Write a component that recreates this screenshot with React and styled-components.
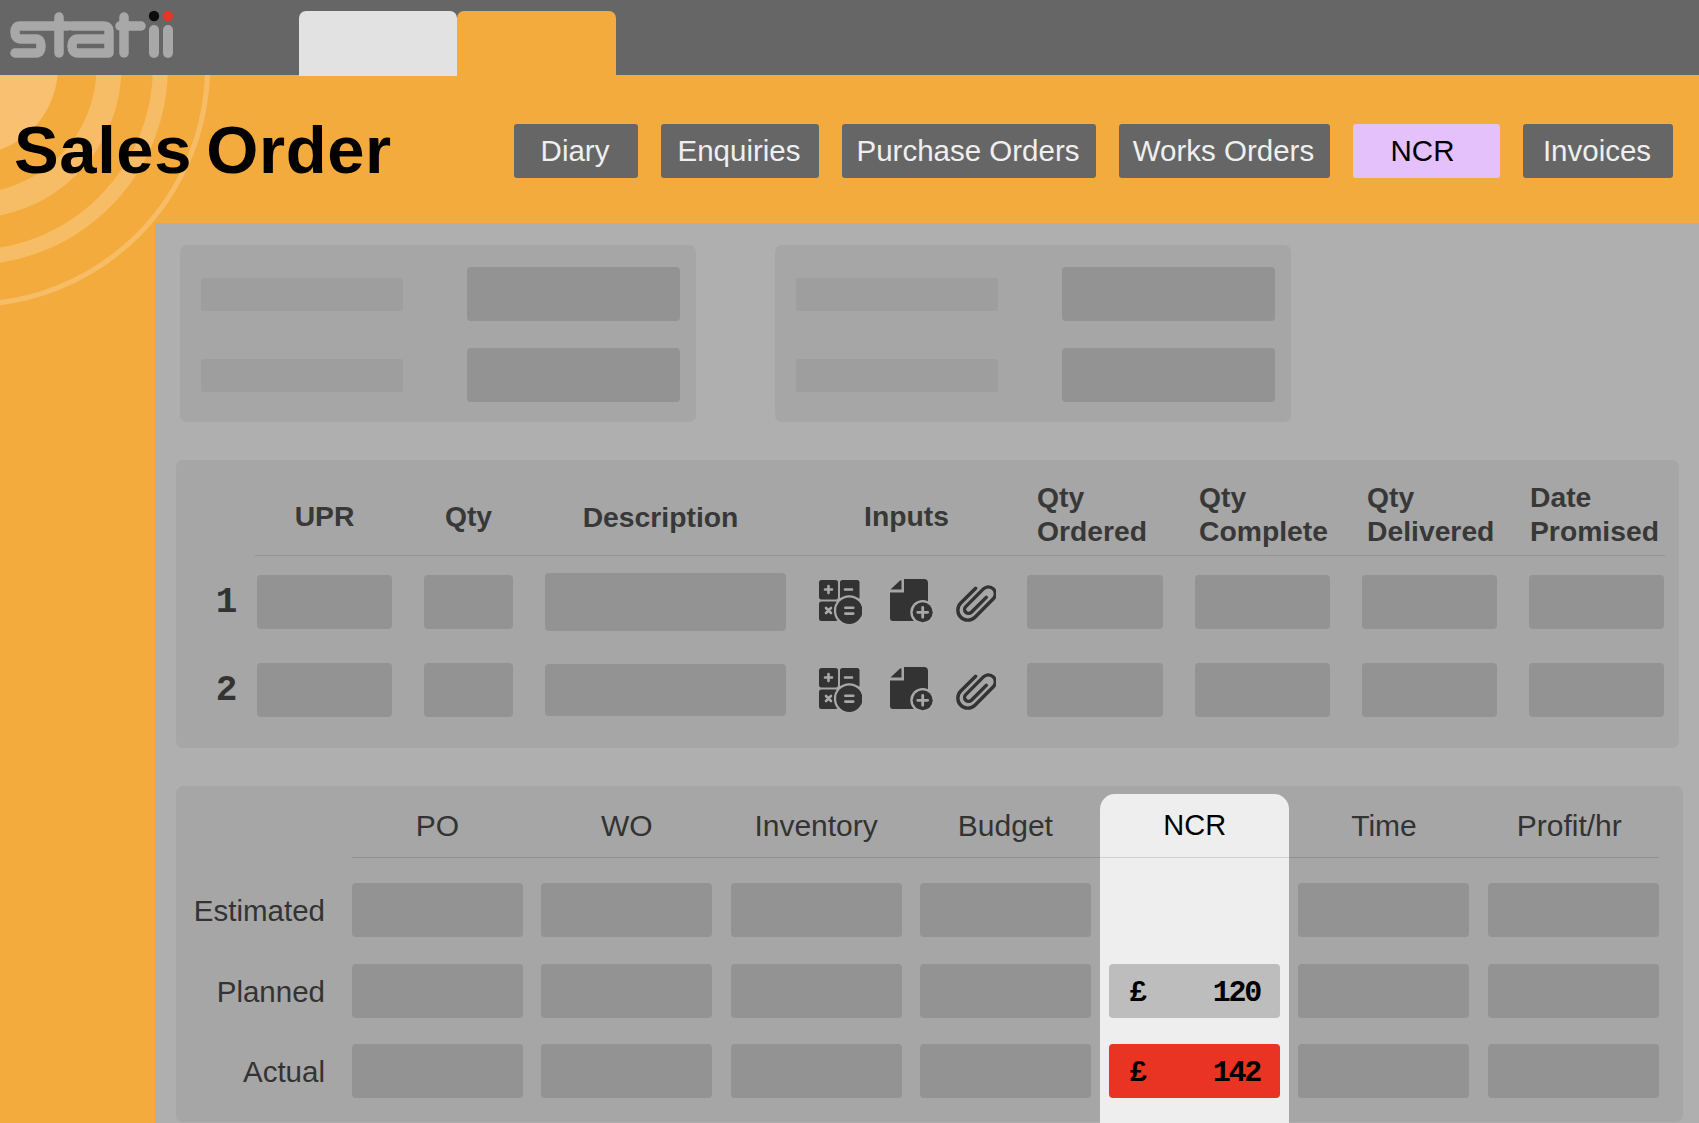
import React from "react";
import styled, { createGlobalStyle, css } from "styled-components";

const Global = createGlobalStyle`
  html, body { margin: 0; padding: 0; height: 1123px; overflow: hidden; background: #f4ab3d; }
  body { font-family: "Liberation Sans", Arial, sans-serif; }
`;

const Page = styled.div`
  position: relative;
  width: 1699px;
  height: 1123px;
  overflow: hidden;
  display: flex;
  flex-direction: column;
  background: #f4ab3d;
`;

const Rings = styled.svg`
  position: absolute;
  left: 0;
  top: 0;
  width: 320px;
  height: 330px;
`;

const TopBar = styled.div`
  position: relative;
  z-index: 2;
  flex: none;
  height: 75px;
  background: #666666;
  display: flex;
`;

const LogoSlot = styled.div`
  width: 299px;
  flex: none;
`;

const Tab = styled.div`
  width: ${(p) => p.$w}px;
  height: 65px;
  margin-top: 11px;
  border-radius: 7px 7px 0 0;
  background: ${(p) => p.$bg};
`;

const Header = styled.header`
  position: relative;
  z-index: 1;
  flex: none;
  height: 148px;
  display: flex;
  justify-content: space-between;
  padding: 0 26px 0 14px;
  box-sizing: border-box;
`;

const Title = styled.h1`
  margin: 39px 0 0;
  font-size: 67px;
  line-height: 72px;
  font-weight: 700;
  color: #000;
  letter-spacing: 0.6px;
  word-spacing: -5px;
  white-space: nowrap;
`;

const Nav = styled.nav`
  display: flex;
  gap: 23px;
  margin-top: 49px;
  align-items: flex-start;
`;

const NavButton = styled.div`
  width: ${(p) => p.$w}px;
  height: 54px;
  box-sizing: border-box;
  padding-right: ${(p) => (p.$active ? 8 : 2)}px;
  border-radius: 3px;
  background: ${(p) => (p.$active ? "#e4c1fb" : "#666666")};
  color: ${(p) => (p.$active ? "#000" : "#efefef")};
  font-size: 29.5px;
  display: flex;
  align-items: center;
  justify-content: center;
`;

const Main = styled.main`
  position: relative;
  z-index: 1;
  flex: 1;
  min-height: 0;
  margin-left: 155px;
  background: #afafaf;
  padding: 22px 0 0 21px;
  display: flex;
  flex-direction: column;
`;

const InfoRow = styled.section`
  display: flex;
  gap: 79px;
  margin-left: 4px;
`;

const InfoPanel = styled.div`
  width: 516px;
  height: 177px;
  box-sizing: border-box;
  padding: 22px 0 0 21px;
  border-radius: 7px;
  background: #a6a6a6;
  display: grid;
  grid-template-columns: 202px 213px;
  grid-auto-rows: 54px;
  column-gap: 64px;
  row-gap: 27px;
  align-items: center;
`;

const LabelStub = styled.div`
  height: 33px;
  border-radius: 3px;
  background: #9e9e9e;
`;

const Field = styled.div`
  height: ${(p) => p.$h || 54}px;
  border-radius: 4px;
  background: #939393;
`;

const LinesPanel = styled.section`
  width: 1503px;
  height: 288px;
  flex: none;
  margin-top: 38px;
  box-sizing: border-box;
  padding-top: 16px;
  border-radius: 7px;
  background: #a6a6a6;
`;

const lineColumns = css`
  display: grid;
  grid-template-columns: 22px 135px 89px 241px 177px 136px 135px 135px 135px;
  column-gap: 32px;
  padding-left: 27px;
`;

const LinesHead = styled.div`
  ${lineColumns}
  height: 79px;
  align-items: center;
`;

const HeadCell = styled.div`
  font-size: 28.3px;
  line-height: 34px;
  font-weight: 700;
  color: #383838;
  white-space: nowrap;
  text-align: ${(p) => (p.$left ? "left" : "center")};
  padding-left: ${(p) => p.$pad || 0}px;
  padding-top: ${(p) => p.$pt || 0}px;
  margin-top: ${(p) => (p.$left ? -3 : 0)}px;
  margin-right: ${(p) => p.$mr || 0}px;
`;

const LinesRule = styled.div`
  height: 1px;
  margin: 0 14px 0 79px;
  background: #949494;
`;

const LineRow = styled.div`
  ${lineColumns}
  height: 54px;
  grid-template-rows: 54px;
  margin-top: ${(p) => p.$top}px;
  align-items: center;
`;

const RowNumber = styled.div`
  margin-right: -24px;
  text-align: center;
  font-family: "Liberation Mono", monospace;
  font-weight: 700;
  font-size: 36px;
  letter-spacing: -1px;
  color: #333333;
`;

const IconSet = styled.div`
  display: flex;
  align-items: center;
  height: 54px;
  padding-left: 1px;
`;

const IconSlot = styled.svg`
  flex: none;
  display: block;
  width: ${(p) => p.$w}px;
  height: ${(p) => p.$h}px;
  margin-left: ${(p) => p.$ml || 0}px;
`;

const CostPanel = styled.section`
  width: 1507px;
  flex: 1;
  margin-top: 38px;
  margin-bottom: 1px;
  box-sizing: border-box;
  padding-top: 8px;
  border-radius: 7px;
  background: #a6a6a6;
  display: grid;
  grid-template-columns: 157.7px repeat(7, 171px);
  column-gap: 18.3px;
  grid-template-rows: 63px 1px 79px 81px 80px 1fr;
`;

const NcrColumn = styled.div`
  grid-column: 6;
  grid-row: 1 / -1;
  margin: 0 -9px -2px;
  border-radius: 15px 15px 0 0;
  background: #eeeeee;
`;

const CostRule = styled.div`
  grid-column: 2 / -1;
  grid-row: 2;
  background: rgba(0, 0, 0, 0.13);
  z-index: 1;
`;

const CostHead = styled.div`
  grid-row: 1;
  grid-column: ${(p) => p.$col};
  z-index: 1;
  align-self: center;
  text-align: center;
  font-size: ${(p) => (p.$active ? 29 : 30)}px;
  color: ${(p) => (p.$active ? "#000" : "#333333")};
  white-space: nowrap;
  margin-right: ${(p) => p.$mr || 0}px;
`;

const CostLabel = styled.div`
  grid-column: 1;
  grid-row: ${(p) => p.$row};
  align-self: end;
  height: 54px;
  box-sizing: border-box;
  padding: 2px 8.7px 0 0;
  display: flex;
  align-items: center;
  justify-content: flex-end;
  font-size: 29.5px;
  color: #333333;
`;

const CostField = styled(Field)`
  grid-row: ${(p) => p.$row};
  grid-column: ${(p) => p.$col};
  align-self: end;
`;

const ValueField = styled.div`
  grid-row: ${(p) => p.$row};
  grid-column: 6;
  align-self: end;
  z-index: 1;
  height: 54px;
  border-radius: 4px;
  background: ${(p) => p.$bg};
  box-sizing: border-box;
  padding: 4px 20px 0;
  display: flex;
  align-items: center;
  justify-content: space-between;
  font-family: "Liberation Mono", monospace;
  font-weight: 700;
  font-size: 30px;
  letter-spacing: -2.2px;
  color: #000;
`;

const Logo = () => (
  <svg width="190" height="70" viewBox="0 0 190 70" fill="none" aria-label="statii">
    <g stroke="#a8a8a8" strokeWidth="9.5" strokeLinecap="round" strokeLinejoin="round">
      <path d="M68 26H20Q15 26 15 32Q15 39 21 39H36Q41 39 41 46Q41 53 36 53H15" />
      <path d="M59 17V53" />
      <path d="M72 26H104Q109 26 109 31V53H78Q72 53 72 46Q72 39 78 39H109" />
      <path d="M124 17V53" />
      <path d="M120 26H141" />
      <path d="M154 30V53" strokeWidth="10" />
      <path d="M168 30V53" strokeWidth="10" />
    </g>
    <circle cx="154" cy="16" r="5.2" fill="#0c0c0c" />
    <circle cx="168" cy="16" r="5.2" fill="#e8352a" />
  </svg>
);

const RingBg = "#a9a9a9";

const CalcIcon = () => (
  <IconSlot $w={43} $h={44} viewBox="0 0 43 44">
    <rect x="0" y="0" width="19" height="19.5" rx="2.5" fill="#333" />
    <rect x="21" y="0" width="19.5" height="19.5" rx="2.5" fill="#333" />
    <rect x="0" y="21.5" width="19" height="19.5" rx="2.5" fill="#333" />
    <rect x="21" y="21.5" width="19.5" height="19.5" rx="2.5" fill="#333" />
    <circle cx="30.3" cy="30.7" r="15.4" fill={RingBg} />
    <circle cx="30.3" cy="30.7" r="13.2" fill="#333" />
    <g stroke={RingBg} strokeWidth="2.6" strokeLinecap="round">
      <path d="M9.5 6V13M6 9.5H13" />
      <path d="M26 9.5H33" />
      <path d="M7 28L12 33M12 28L7 33" />
      <path d="M26.3 27.8H34.3M26.3 33.6H34.3" />
    </g>
  </IconSlot>
);

const DocIcon = () => (
  <IconSlot $w={46} $h={46} $ml={28} viewBox="0 0 46 46">
    <path d="M0.5 10.5L10 1.5Q11.5 0.5 11.5 2.5V10.5Z" fill="#333" />
    <path d="M14 0H34Q38 0 38 4V38Q38 42 34 42H3Q0 42 0 39V13.5H14Z" fill="#333" />
    <circle cx="32.7" cy="33.3" r="12.4" fill={RingBg} />
    <circle cx="32.7" cy="33.3" r="10" fill="#333" />
    <path d="M32.7 28.3V38.3M27.7 33.3H37.7" stroke={RingBg} strokeWidth="2.8" strokeLinecap="round" />
  </IconSlot>
);

const ClipIcon = () => (
  <IconSlot $w={40} $h={40} $ml={20} viewBox="0 0 40 40">
    <g transform="translate(20 20) rotate(45) translate(-10 -22.5)" fill="none" stroke="#333" strokeWidth="3.4" strokeLinecap="round">
      <path d="M14 12V33a4 4 0 0 1 -8 0V8a7 7 0 0 1 14 0V34a10 10 0 0 1 -20 0V13" />
    </g>
  </IconSlot>
);

const navItems = [
  ["Diary", 124],
  ["Enquiries", 158],
  ["Purchase Orders", 254],
  ["Works Orders", 211],
  ["NCR", 147],
  ["Invoices", 150],
];

const costCols = [
  ["PO", 2],
  ["WO", 3],
  ["Inventory", 4],
  ["Budget", 5],
  ["NCR", 6],
  ["Time", 7],
  ["Profit/hr", 8],
];

const LineCells = ({ n, descH }) => (
  <>
    <RowNumber>{n}</RowNumber>
    <Field />
    <Field />
    <Field $h={descH} />
    <IconSet>
      <CalcIcon />
      <DocIcon />
      <ClipIcon />
    </IconSet>
    <Field />
    <Field />
    <Field />
    <Field />
  </>
);

export default function App() {
  return (
    <Page>
      <Global />
      <Rings viewBox="0 0 320 330">
        <g fill="none" stroke="#f7bd66">
          <circle cx="-30" cy="67" r="88" fill="#f8c070" stroke="none" />
          <circle cx="-30" cy="67" r="139" strokeWidth="25" />
          <circle cx="-30" cy="67" r="190.5" strokeWidth="15" />
          <circle cx="-30" cy="67" r="237.5" strokeWidth="5" />
        </g>
      </Rings>
      <TopBar>
        <LogoSlot>
          <Logo />
        </LogoSlot>
        <Tab $w={158} $bg="#e2e2e2" />
        <Tab $w={159} $bg="#f4ab3d" />
      </TopBar>
      <Header>
        <Title>Sales Order</Title>
        <Nav>
          {navItems.map(([label, w]) => (
            <NavButton key={label} $w={w} $active={label === "NCR"}>
              {label}
            </NavButton>
          ))}
        </Nav>
      </Header>
      <Main>
        <InfoRow>
          {[0, 1].map((i) => (
            <InfoPanel key={i}>
              <LabelStub />
              <Field />
              <LabelStub />
              <Field />
            </InfoPanel>
          ))}
        </InfoRow>
        <LinesPanel>
          <LinesHead>
            <span />
            <HeadCell>UPR</HeadCell>
            <HeadCell>Qty</HeadCell>
            <HeadCell $mr={10} $pt={3}>Description</HeadCell>
            <HeadCell>Inputs</HeadCell>
            <HeadCell $left $pad={10}>Qty<br />Ordered</HeadCell>
            <HeadCell $left $pad={4}>Qty<br />Complete</HeadCell>
            <HeadCell $left $pad={5}>Qty<br />Delivered</HeadCell>
            <HeadCell $left $pad={1}>Date<br />Promised</HeadCell>
          </LinesHead>
          <LinesRule />
          <LineRow $top={19}>
            <LineCells n={1} descH={58} />
          </LineRow>
          <LineRow $top={34}>
            <LineCells n={2} descH={52} />
          </LineRow>
        </LinesPanel>
        <CostPanel>
          <NcrColumn />
          {costCols.map(([label, col]) => (
            <CostHead key={label} $col={col} $active={label === "NCR"} $mr={label === "Profit/hr" ? 8 : 0}>
              {label}
            </CostHead>
          ))}
          <CostRule />
          {["Estimated", "Planned", "Actual"].map((label, r) => (
            <CostLabel key={label} $row={r + 3}>{label}</CostLabel>
          ))}
          {[3, 4, 5].flatMap((row) =>
            [2, 3, 4, 5, 7, 8].map((col) => <CostField key={`${row}-${col}`} $row={row} $col={col} />)
          )}
          <ValueField $row={4} $bg="#bdbdbd"><span>£</span><span>120</span></ValueField>
          <ValueField $row={5} $bg="#e93323"><span>£</span><span>142</span></ValueField>
        </CostPanel>
      </Main>
    </Page>
  );
}
